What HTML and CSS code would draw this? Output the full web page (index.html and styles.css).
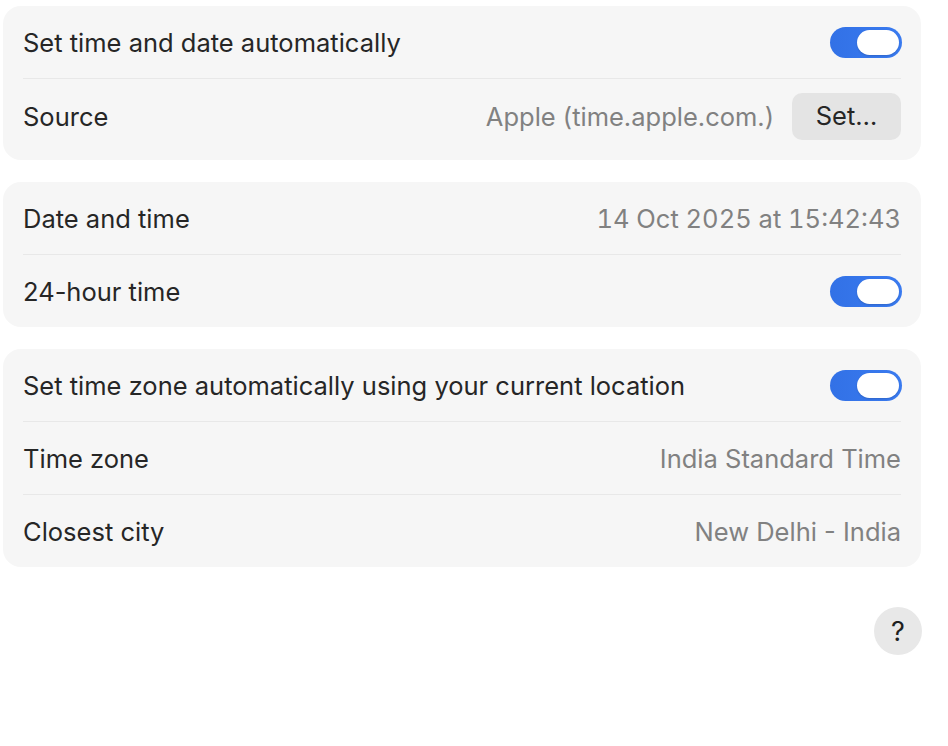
FILE: index.html
```html
<!DOCTYPE html>
<html lang="en">
<head>
<meta charset="utf-8">
<title>Date &amp; Time</title>
<link rel="stylesheet" href="styles.css">
</head>
<body>
<main class="pane">
  <section class="card">
    <div class="row">
      <span class="label">Set time and date automatically</span>
      <span class="toggle on"><span class="knob"></span></span>
    </div>
    <div class="row row-button">
      <span class="label">Source</span>
      <div class="trail">
        <span class="value">Apple (time.apple.com.)</span>
        <button class="btn">Set…</button>
      </div>
    </div>
  </section>

  <section class="card">
    <div class="row">
      <span class="label">Date and time</span>
      <span class="value nums">14 Oct 2025 at 15:42:43</span>
    </div>
    <div class="row">
      <span class="label">24-hour time</span>
      <span class="toggle on"><span class="knob"></span></span>
    </div>
  </section>

  <section class="card">
    <div class="row">
      <span class="label">Set time zone automatically using your current location</span>
      <span class="toggle on"><span class="knob"></span></span>
    </div>
    <div class="row">
      <span class="label">Time zone</span>
      <span class="value">India Standard Time</span>
    </div>
    <div class="row">
      <span class="label">Closest city</span>
      <span class="value">New Delhi - India</span>
    </div>
  </section>

  <div class="footer">
    <button class="help">?</button>
  </div>
</main>
</body>
</html>
```
FILE: styles.css
```css
* { box-sizing: border-box; }
html, body { margin: 0; padding: 0; background: #ffffff; }
body {
  width: 948px;
  height: 746px;
  overflow: hidden;
  font-family: Inter, "Noto Sans", "Liberation Sans", sans-serif;
  color: #262626;
}
.pane {
  display: flex;
  flex-direction: column;
  gap: 22px;
  padding: 6px 27px 0 3px;
}
.card {
  background: #f6f6f6;
  border-radius: 18px;
  padding: 0 20px;
}
.row {
  display: flex;
  align-items: center;
  justify-content: space-between;
  min-height: 73px;
  border-top: 1px solid #e8e8e8;
}
.row:first-child {
  border-top: none;
  min-height: 72px;
}
.row-button {
  min-height: 82px;
  padding-bottom: 6px;
}
.label {
  font-size: 25.5px;
  color: #262626;
}
.value {
  font-size: 25.5px;
  color: #818181;
}
.nums {
  font-variant-numeric: tabular-nums;
}
.trail {
  display: flex;
  align-items: center;
  gap: 18px;
}
.btn {
  font-family: inherit;
  font-size: 25.5px;
  color: #262626;
  background: #e4e4e4;
  border: none;
  border-radius: 10px;
  width: 109px;
  height: 47px;
  padding: 0 0 2px;
}
.toggle {
  display: flex;
  align-items: center;
  justify-content: flex-end;
  width: 72px;
  height: 31px;
  border-radius: 16px;
  background: linear-gradient(90deg, #3271e6, #3a7bf0);
  padding: 0 3px;
  margin-right: -1px;
}
.knob {
  width: 42px;
  height: 25px;
  border-radius: 13px;
  background: #ffffff;
  box-shadow: 0 1px 2px rgba(0, 0, 0, 0.15);
}
.footer {
  display: flex;
  justify-content: flex-end;
  margin-top: 18px;
  margin-right: -1px;
}
.help {
  width: 48px;
  height: 48px;
  border-radius: 50%;
  border: none;
  background: #e8e8e8;
  font-family: inherit;
  font-size: 27px;
  font-weight: 400;
  color: #1f1f1f;
  padding: 0;
}
```
